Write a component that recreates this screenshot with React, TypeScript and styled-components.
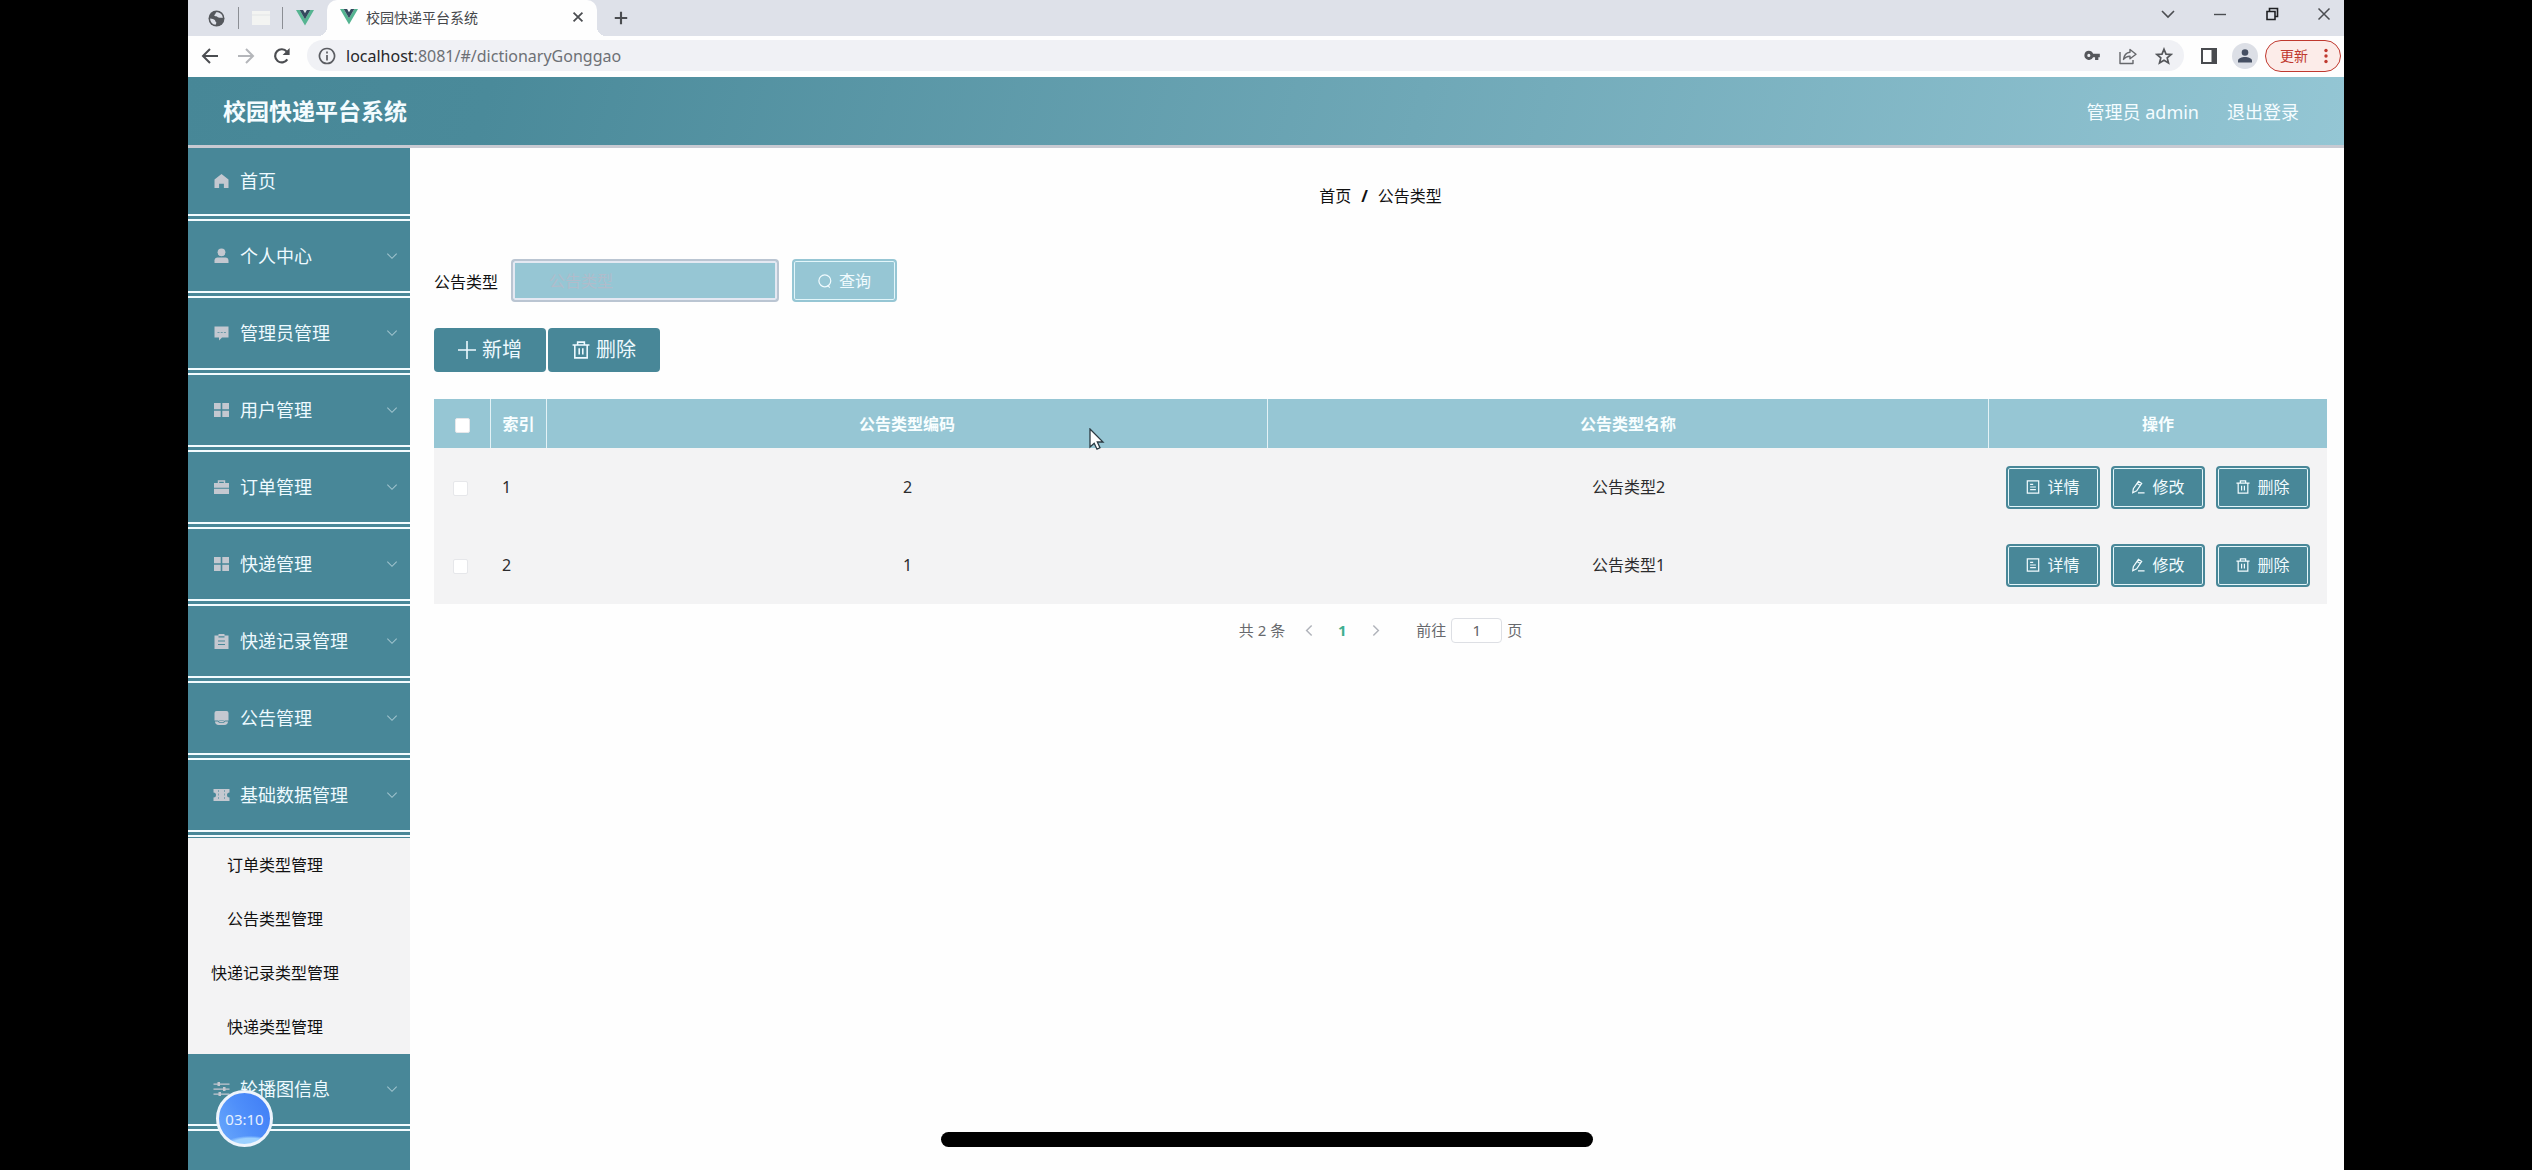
import React from "react";
import styled, { createGlobalStyle, css } from "styled-components";

const teal = "#488798";
const sky = "#96c6d4";
const family = `"Noto Sans", "Noto Sans CJK SC", sans-serif`;

const GlobalStyle = createGlobalStyle`
  *, *::before, *::after { box-sizing: border-box; }
  body { margin: 0; background: #000; font-family: ${family}; font-size: 16px; color: #111; }
  button, input { font-family: inherit; margin: 0; }
  button { cursor: pointer; }
  a { color: inherit; text-decoration: none; }
`;

/* ---------- frame ---------- */

const Screen = styled.div`
  position: relative;
  height: 100vh;
  padding: 0 188px;
  background: #000;
  overflow: hidden;
`;

const Browser = styled.div`
  display: flex;
  flex-direction: column;
  height: 100%;
  background: #fefefe;
`;

const TabStrip = styled.div`
  display: flex;
  align-items: center;
  height: 36px;
  flex: none;
  background: #dee1e9;
`;

const PinnedTabs = styled.div`
  display: flex;
  align-items: center;
  padding-left: 7px;
`;

const PinnedTab = styled.button`
  display: flex;
  align-items: center;
  justify-content: center;
  width: 44px;
  height: 22px;
  padding: 0;
  border: 0;
  border-right: 1px solid #8b8e94;
  background: transparent;
  &:last-child { border-right-color: transparent; }
`;

const ActiveTab = styled.div`
  position: relative;
  display: flex;
  align-items: center;
  align-self: stretch;
  width: 270px;
  padding: 0 7px 2px 13px;
  gap: 8px;
  border-radius: 10px 10px 0 0;
  background: #fefefe;
  font-size: 14px;
  color: #45474b;
  &::before, &::after {
    content: "";
    position: absolute;
    bottom: 0;
    width: 9px;
    height: 9px;
  }
  &::before { left: -9px; background: radial-gradient(circle at 0 0, transparent 9px, #fefefe 9px); }
  &::after { right: -9px; background: radial-gradient(circle at 100% 0, transparent 9px, #fefefe 9px); }
`;

const TabTitle = styled.span`
  flex: 1;
`;

const IconButton = styled.button<{ $w?: number }>`
  display: flex;
  align-items: center;
  justify-content: center;
  flex: none;
  width: ${(p) => p.$w ?? 36}px;
  height: 28px;
  padding: 0;
  border: 0;
  background: transparent;
  color: #4b4d51;
`;

const NewTab = styled(IconButton)`
  margin-left: 8px;
`;

const WindowControls = styled.div`
  display: flex;
  align-self: flex-start;
  margin-left: auto;
  margin-right: -6px;
`;

const Toolbar = styled.div`
  display: flex;
  align-items: center;
  flex: none;
  height: 41px;
  padding: 0 3px 2px 4px;
  background: #fefefe;
`;

const AddressBar = styled.div`
  display: flex;
  align-items: center;
  flex: 1;
  height: 31px;
  margin-left: 7px;
  margin-right: 7px;
  padding: 0 7px 0 11px;
  gap: 10px;
  border-radius: 16px;
  background: #f0f1f5;
`;

const Address = styled.div`
  flex: 1;
  font-size: 16px;
  line-height: 24px;
  color: #6d7075;
`;

const Host = styled.span`
  color: #26272a;
`;

const UpdateButton = styled.button`
  display: flex;
  align-items: center;
  justify-content: space-between;
  width: 76px;
  height: 32px;
  margin-left: 2px;
  padding: 0 12px 0 14px;
  border: 1px solid #c0392f;
  border-radius: 16px;
  background: #fcece9;
  color: #c0392f;
  font-size: 14px;
  line-height: 20px;
`;

const Avatar = styled.button`
  display: flex;
  align-items: center;
  justify-content: center;
  width: 26px;
  height: 26px;
  margin: 0 5px;
  padding: 0;
  border: 0;
  border-radius: 50%;
  background: #dcdfe6;
`;

/* ---------- app header ---------- */

const Header = styled.header`
  display: flex;
  align-items: center;
  flex: none;
  height: 71px;
  padding: 0 45px 0 35px;
  gap: 28px;
  border-bottom: 3px solid #c8cad2;
  background: linear-gradient(105deg, #478797 0%, #4a8a9a 14%, #94c6d4 100%);
  color: #f4fcff;
  font-size: 18px;
`;

const Brand = styled.h1`
  flex: 1;
  margin: 0;
  font-size: 23px;
  line-height: 32px;
  font-weight: 700;
`;

const Body = styled.div`
  display: flex;
  flex: 1;
  min-height: 0;
`;

/* ---------- sidebar ---------- */

const Sidebar = styled.nav`
  flex: none;
  width: 222px;
  background: ${teal};
`;

const MenuItem = styled.button<{ $first?: boolean }>`
  display: flex;
  align-items: center;
  width: 100%;
  height: ${(p) => (p.$first ? 73 : 77)}px;
  padding: 0 12px 0 25px;
  gap: 10px;
  border: 0;
  border-bottom: 7px double #f3fcff;
  background: ${teal};
  color: #eefaff;
  font-size: 18px;
  line-height: 26px;
  text-align: left;
`;

const MenuLabel = styled.span`
  flex: 1;
`;

const SubMenu = styled.div`
  display: flex;
  flex-direction: column;
  border-top: 1px solid ${teal};
  background: #f3f3f4;
`;

const SubLink = styled.a`
  display: flex;
  align-items: center;
  justify-content: center;
  height: 54px;
  padding-right: 48px;
  font-size: 16px;
  line-height: 24px;
`;

/* ---------- content ---------- */

const Content = styled.main`
  flex: 1;
  min-width: 0;
  padding: 32px 17px 0 24px;
`;

const Breadcrumb = styled.nav`
  display: flex;
  justify-content: center;
  gap: 10px;
  line-height: 32px;
`;

const Slash = styled.span`
  font-weight: 700;
`;

const SearchForm = styled.form`
  display: flex;
  align-items: center;
  margin-top: 47px;
`;

const SearchInput = styled.input`
  width: 268px;
  height: 43px;
  margin: 0 13px;
  padding: 0 36px;
  border: 2px solid #bac5d2;
  border-radius: 4px;
  box-shadow: inset 0 0 0 2px #e4e8f2;
  background: ${sky};
  font-size: 16px;
  &::placeholder { color: #b0bccb; opacity: 1; }
`;

const framed = css<{ $fill: string }>`
  display: flex;
  align-items: center;
  justify-content: center;
  gap: 7px;
  height: 43px;
  padding: 0;
  border: 2px solid ${(p) => p.$fill};
  border-radius: 4px;
  box-shadow: inset 0 0 0 1px #e3f6fa;
  background: ${(p) => p.$fill};
  color: #f1fbfe;
  font-size: 16px;
  line-height: 24px;
`;

const QueryButton = styled.button<{ $fill: string }>`
  ${framed}
  width: 105px;
`;

const RowButton = styled.button<{ $fill: string }>`
  ${framed}
  width: 94px;
`;

const Actions = styled.div`
  display: flex;
  gap: 2px;
  margin: 26px 0 27px;
`;

const ActionButton = styled.button`
  display: flex;
  align-items: center;
  justify-content: center;
  gap: 6px;
  width: 112px;
  height: 44px;
  padding: 0;
  border: 0;
  border-radius: 4px;
  background: ${teal};
  color: #eefaff;
  font-size: 20px;
  line-height: 28px;
`;

const Table = styled.table`
  width: 100%;
  table-layout: fixed;
  border-collapse: separate;
  border-spacing: 0;
`;

const Col = styled.col<{ $w?: number }>`
  width: ${(p) => (p.$w ? `${p.$w}px` : "auto")};
`;

const Th = styled.th`
  height: 49px;
  padding: 0;
  border-right: 1px solid #e4f2f6;
  background: ${sky};
  color: #f8feff;
  font-weight: 700;
  line-height: 24px;
  &:last-child { border-right: 0; }
`;

const Td = styled.td<{ $left?: number }>`
  height: 78px;
  padding: 0 0 0 ${(p) => p.$left ?? 0}px;
  background: #f3f3f4;
  text-align: ${(p) => (p.$left ? "left" : "center")};
  line-height: 24px;
  color: #2b2b2d;
`;

const CheckBox = styled.input`
  appearance: none;
  display: inline-block;
  width: 15px;
  height: 15px;
  border: 1px solid #e6e7ea;
  border-radius: 2px;
  background: #fff;
  vertical-align: middle;
`;

const RowButtons = styled.div`
  display: flex;
  justify-content: center;
  gap: 11px;
`;

const Pagination = styled.div`
  display: flex;
  align-items: center;
  justify-content: center;
  margin-top: 12px;
  font-size: 15px;
  line-height: 28px;
  color: #67696d;
`;

const Total = styled.span`
  margin-right: 6px;
`;

const PageButton = styled.button<{ $current?: boolean }>`
  display: flex;
  align-items: center;
  justify-content: center;
  width: ${(p) => (p.$current ? 30 : 36)}px;
  height: 28px;
  padding: 0;
  border: 0;
  background: transparent;
  font-size: 15px;
  font-weight: 700;
  color: ${(p) => (p.$current ? "#3fae90" : "#b0b3ba")};
`;

const Jump = styled.label`
  display: flex;
  align-items: center;
  gap: 5px;
  margin-left: 23px;
`;

const JumpInput = styled.input`
  width: 51px;
  height: 25px;
  padding: 0;
  border: 1px solid #dddfe4;
  border-radius: 4px;
  background: #fff;
  color: #606266;
  font-size: 15px;
  text-align: center;
`;

/* ---------- overlays ---------- */

const Pointer = styled.svg`
  position: absolute;
  left: 43%;
  top: 428px;
`;

const Timer = styled.div`
  position: absolute;
  left: 216px;
  bottom: 23px;
  display: flex;
  align-items: center;
  justify-content: center;
  width: 57px;
  height: 57px;
  border: 3px solid #eef4fc;
  border-radius: 50%;
  background: radial-gradient(ellipse 50% 16% at 62% 100%, #9cd0ff 70%, transparent 100%),
    linear-gradient(60deg, #6aa9fb 0%, #4f8ffa 50%, #3f7cf5 100%);
  color: #e6f1ff;
  font-size: 15px;
`;

const HomeBar = styled.div`
  position: absolute;
  left: 50%;
  bottom: 23px;
  width: 652px;
  height: 15px;
  margin-left: -325px;
  border-radius: 8px;
  background: #000;
`;

/* ---------- icons ---------- */

const VueLogo = () => (
  <svg width="18" height="16" viewBox="0 0 18 16" aria-hidden="true">
    <path d="M0 0h3.7L9 9.2 14.3 0H18L9 15.6z" fill="#55b491" />
    <path d="M3.7 0h3.4L9 3.3 10.9 0h3.4L9 9.2z" fill="#34495e" />
  </svg>
);

const Globe = () => (
  <svg width="17" height="17" viewBox="0 0 17 17" aria-hidden="true">
    <circle cx="8.5" cy="8.5" r="8" fill="#55585d" />
    <path d="M2.2 8.4c2 .2 3.600.6 4.600 1.500.6.6.2 1.300 1 1.800.8.4.6 1.600-.2 3.100C4.300 14.300 2 11.600 2.200 8.400z" fill="#dee1e9" />
    <path d="M8.200 2.200c-1 1.200-.4 1.800-1.600 2.600-.8.6 0 1.700 1.300 1.400 1.200-.3 1.400.8 2.500 1.300 1 .4 2.600-.2 4.300.5.2-3.400-2.600-6-6.500-5.800z" fill="#dee1e9" />
  </svg>
);

const BlankIcon = () => (
  <svg width="18" height="16" viewBox="0 0 18 16" aria-hidden="true">
    <rect x="0" y="1" width="18" height="14" fill="#f3f4f2" />
    <path d="M0 5h18" stroke="#e2e5e6" />
  </svg>
);

type StrokeProps = { d: string; size?: number; w?: number; color?: string };
const Stroke = ({ d, size = 18, w = 2, color = "currentColor" }: StrokeProps) => (
  <svg width={size} height={size} viewBox="0 0 18 18" fill="none" stroke={color} strokeWidth={w} aria-hidden="true">
    <path d={d} />
  </svg>
);

const Reload = () => (
  <svg width="18" height="18" viewBox="0 0 18 18" aria-hidden="true">
    <path d="M14.3 12.4A6.6 6.6 0 1 1 13.8 4.6" fill="none" stroke="#4b4d51" strokeWidth="2.2" />
    <path d="M16.6 1v7h-7z" fill="#4b4d51" />
  </svg>
);

const Key = () => (
  <svg width="17" height="11" viewBox="0 0 18 12" aria-hidden="true">
    <path fillRule="evenodd" d="M5 .8a5 5 0 0 1 4.7 3.300H17v3.800h-1.600V11h-3.600V7.900H9.700A5 5 0 1 1 5 .8zM5 4.200a1.700 1.700 0 1 0 0 3.400 1.700 1.700 0 0 0 0-3.400z" fill="#55575b" />
  </svg>
);

const Share = () => (
  <svg width="18" height="18" viewBox="0 0 18 18" fill="none" stroke="#66686c" strokeWidth="1.4" strokeLinejoin="round" aria-hidden="true">
    <path d="M1 5v11.5h13V13" />
    <path d="M11 2.5l6 4.700-6 4.600V9.200c-3 0-5 1-6.500 3.200C5 8.400 7 5.600 11 5.200z" />
  </svg>
);

const Star = () => (
  <svg width="18" height="18" viewBox="0 0 18 18" fill="none" stroke="#55575b" strokeWidth="1.7" aria-hidden="true">
    <path d="M9 2.200l2 4.900 5.200.4-4 3.400 1.300 5.100L9 13.200 4.500 16l1.300-5.100-4-3.400 5.200-.4z" />
  </svg>
);

const SidePanel = () => (
  <svg width="16" height="16" viewBox="0 0 16 16" aria-hidden="true">
    <path fillRule="evenodd" d="M0 0h16v16H0zM2 2v12h8.500V2z" fill="#494b4f" />
  </svg>
);

const Person = () => (
  <svg width="14" height="14" viewBox="0 0 14 14" fill="#465063" aria-hidden="true">
    <circle cx="7" cy="3.5" r="3.3" />
    <path d="M0 13.500v-2C0 9.300 4 8 7 8s7 1.300 7 3.500v2z" />
  </svg>
);

const Dots = () => (
  <svg width="4" height="16" viewBox="0 0 4 16" fill="#c0392f" aria-hidden="true">
    <circle cx="2" cy="2.5" r="1.7" />
    <circle cx="2" cy="8" r="1.7" />
    <circle cx="2" cy="13.5" r="1.7" />
  </svg>
);

const menuGlyphs: Record<string, React.ReactNode> = {
  home: <path d="M8 1l7 5.600V15h-4.600v-4.200H5.600V15H1V6.600z" />,
  user: (
    <>
      <circle cx="8" cy="4.3" r="3.9" />
      <path d="M1 15v-2.500C1 10.600 2.400 9.500 4 9.500h8c1.600 0 3 1.100 3 3V15z" />
    </>
  ),
  chat: (
    <>
      <path d="M1 1.500h14v11H8.500L5.500 15.500v-3H1z" />
      <path d="M4 7.500h2M7.200 7.500h2M10.400 7.500h2" stroke={teal} strokeWidth="1.2" opacity=".7" />
    </>
  ),
  grid: <path d="M.5 1h6.700v6.200H.5zM8.800 1h6.700v6.200H8.800zM.5 8.800h6.700V15H.5zM8.800 8.800h6.700V15H8.800z" />,
  bag: (
    <>
      <path d="M5 4V2h6v2" fill="none" stroke="#c4c8d0" strokeWidth="1.4" />
      <path d="M.5 4h15v4.700H.5zM.5 9.800h15V15H.5z" />
    </>
  ),
  board: (
    <>
      <path d="M1 2.500h4V1h6v1.500h4V16H1z" />
      <path d="M4.500 8h7M4.500 11.500h7M5 3.800h6" stroke={teal} strokeWidth="1.2" />
    </>
  ),
  notice: (
    <>
      <path d="M3 1h10a2 2 0 0 1 2 2v7.500H1V3a2 2 0 0 1 2-2zM1.500 11.500h3l1 1.200h5l1-1.200h3c0 2-1.500 3.500-3.500 3.500H5c-2 0-3.500-1.500-3.500-3.500z" />
      <path d="M5 10.200l1 1.300h4l1-1.300" stroke="#c4c8d0" fill="none" />
    </>
  ),
  ticket: (
    <>
      <path d="M0 2h16v3.500a2.500 2.500 0 0 0 0 5V14H0v-3.500a2.500 2.500 0 0 0 0-5z" />
      <path d="M5 3v10M11 3v10" stroke={teal} strokeWidth=".8" strokeDasharray="2 1.5" opacity=".7" />
    </>
  ),
  sliders: <path d="M0 2.500h16v1.200H0zM0 7.500h16v1.200H0zM0 12.500h16v1.200H0zM4 1h2.500v4H4zM9.500 6H12v4H9.500zM5 11h2.500v4H5z" />,
};

const MenuIcon = ({ name }: { name: string }) => (
  <svg width="17" height="16" viewBox="0 0 16 16" fill="#c4c8d0" aria-hidden="true">
    {menuGlyphs[name]}
  </svg>
);

const glyphs: Record<string, React.ReactNode> = {
  search: (
    <>
      <circle cx="7.8" cy="7.8" r="6.8" />
      <path d="M11 13l2.500 2.500" />
    </>
  ),
  plus: <path d="M8 0v16M0 8h16" />,
  trash: <path d="M.5 3.500h15M5 3.300V1h6v2.300M2.500 3.500V15h11V3.500M6.400 6.500v5.500M9.600 6.500v5.500" />,
  detail: <path d="M1.500 1h13v14h-13zM4.700 5h3.500M4.700 8h6.600M4.700 11h6.600" />,
  edit: <path d="M2 14.500l.7-4.500L8.500 1.500l3.700 2.400L6.500 12.400zM7 4l3.600 2.400M8 14.800h7.500" />,
};

const Glyph = ({ name, size = 14 }: { name: string; size?: number }) => (
  <svg width={size} height={size} viewBox="0 0 16 16" fill="none" stroke="currentColor" strokeWidth="1.4" aria-hidden="true">
    {glyphs[name]}
  </svg>
);

/* ---------- data ---------- */

const menu = [
  { icon: "home", label: "首页" },
  { icon: "user", label: "个人中心" },
  { icon: "chat", label: "管理员管理" },
  { icon: "grid", label: "用户管理" },
  { icon: "bag", label: "订单管理" },
  { icon: "grid", label: "快递管理" },
  { icon: "board", label: "快递记录管理" },
  { icon: "notice", label: "公告管理" },
  { icon: "ticket", label: "基础数据管理", children: ["订单类型管理", "公告类型管理", "快递记录类型管理", "快递类型管理"] },
  { icon: "sliders", label: "轮播图信息" },
];

const rows = [
  { index: 1, code: 2, name: "公告类型2" },
  { index: 2, code: 1, name: "公告类型1" },
];

const rowActions = [
  { icon: "detail", label: "详情" },
  { icon: "edit", label: "修改" },
  { icon: "trash", label: "删除" },
];

/* ---------- page ---------- */

const BrowserChrome = () => (
  <>
    <TabStrip>
      <PinnedTabs>
        <PinnedTab aria-label="网页"><Globe /></PinnedTab>
        <PinnedTab aria-label="空白页"><BlankIcon /></PinnedTab>
        <PinnedTab aria-label="Vue"><VueLogo /></PinnedTab>
      </PinnedTabs>
      <ActiveTab>
        <VueLogo />
        <TabTitle>校园快递平台系统</TabTitle>
        <IconButton $w={24} aria-label="关闭标签页"><Stroke d="M4 4l10 10M14 4L4 14" size={16} /></IconButton>
      </ActiveTab>
      <NewTab $w={32} aria-label="新标签页"><Stroke d="M9 2v14M2 9h14" w={2.4} size={16} /></NewTab>
      <WindowControls>
        <IconButton $w={52} aria-label="搜索标签页"><Stroke d="M3 6l6 6 6-6" w={1.6} /></IconButton>
        <IconButton $w={52} aria-label="最小化"><Stroke d="M3 9.500h12" w={1.4} /></IconButton>
        <IconButton $w={52} aria-label="还原"><Stroke d="M4 6.500h8v8H4zM6.500 6V3.500h8v8H12.500" w={1.6} color="#1f2023" /></IconButton>
        <IconButton $w={52} aria-label="关闭"><Stroke d="M3.500 3.500l11 11M14.500 3.500l-11 11" w={1.5} /></IconButton>
      </WindowControls>
    </TabStrip>
    <Toolbar>
      <IconButton aria-label="后退"><Stroke d="M17 9H2.500M9 2L2 9l7 7" /></IconButton>
      <IconButton aria-label="前进"><Stroke d="M1 9h14.500M9 2l7 7-7 7" color="#b4b6ba" /></IconButton>
      <IconButton aria-label="重新加载"><Reload /></IconButton>
      <AddressBar>
        <Stroke d="M9 1.500a7.500 7.500 0 1 0 .01 0zM9 8v5.500M9 4.500v2" w={1.7} color="#5b5d62" />
        <Address><Host>localhost</Host>:8081/#/dictionaryGonggao</Address>
        <IconButton $w={26} aria-label="密码"><Key /></IconButton>
        <IconButton $w={26} aria-label="分享"><Share /></IconButton>
        <IconButton $w={26} aria-label="收藏"><Star /></IconButton>
      </AddressBar>
      <IconButton aria-label="侧边栏"><SidePanel /></IconButton>
      <Avatar aria-label="用户"><Person /></Avatar>
      <UpdateButton>更新<Dots /></UpdateButton>
    </Toolbar>
  </>
);

const App = () => (
  <Screen>
    <GlobalStyle />
    <Browser>
      <BrowserChrome />
      <Header>
        <Brand>校园快递平台系统</Brand>
        <span>管理员 admin</span>
        <a href="#logout">退出登录</a>
      </Header>
      <Body>
        <Sidebar>
          {menu.map((item, i) => (
            <React.Fragment key={item.label}>
              <MenuItem $first={i === 0}>
                <MenuIcon name={item.icon} />
                <MenuLabel>{item.label}</MenuLabel>
                {i > 0 && <Stroke d="M2 5.500l7 7 7-7" size={12} w={1.6} color="#9fc3cd" />}
              </MenuItem>
              {item.children && (
                <SubMenu>
                  {item.children.map((c) => (
                    <SubLink key={c} href="#/dictionary">{c}</SubLink>
                  ))}
                </SubMenu>
              )}
            </React.Fragment>
          ))}
        </Sidebar>
        <Content>
          <Breadcrumb>
            <a href="#/">首页</a>
            <Slash>/</Slash>
            <span>公告类型</span>
          </Breadcrumb>
          <SearchForm onSubmit={(e) => e.preventDefault()}>
            <label htmlFor="type-name">公告类型</label>
            <SearchInput id="type-name" placeholder="公告类型" />
            <QueryButton $fill={sky}><Glyph name="search" />查询</QueryButton>
          </SearchForm>
          <Actions>
            <ActionButton><Glyph name="plus" size={18} />新增</ActionButton>
            <ActionButton><Glyph name="trash" size={18} />删除</ActionButton>
          </Actions>
          <Table>
            <colgroup>
              <Col $w={57} />
              <Col $w={56} />
              <Col />
              <Col />
              <Col $w={338} />
            </colgroup>
            <thead>
              <tr>
                <Th><CheckBox type="checkbox" aria-label="全选" /></Th>
                <Th>索引</Th>
                <Th>公告类型编码</Th>
                <Th>公告类型名称</Th>
                <Th>操作</Th>
              </tr>
            </thead>
            <tbody>
              {rows.map((r) => (
                <tr key={r.index}>
                  <Td $left={19}><CheckBox type="checkbox" aria-label={`选择第${r.index}行`} /></Td>
                  <Td $left={11}>{r.index}</Td>
                  <Td>{r.code}</Td>
                  <Td>{r.name}</Td>
                  <Td>
                    <RowButtons>
                      {rowActions.map((a) => (
                        <RowButton key={a.label} $fill={teal}><Glyph name={a.icon} />{a.label}</RowButton>
                      ))}
                    </RowButtons>
                  </Td>
                </tr>
              ))}
            </tbody>
          </Table>
          <Pagination>
            <Total>共 2 条</Total>
            <PageButton aria-label="上一页"><Stroke d="M12 2L5 9l7 7" size={13} /></PageButton>
            <PageButton $current>1</PageButton>
            <PageButton aria-label="下一页"><Stroke d="M6 2l7 7-7 7" size={13} /></PageButton>
            <Jump>
              前往
              <JumpInput defaultValue="1" />
              页
            </Jump>
          </Pagination>
        </Content>
      </Body>
    </Browser>
    <Pointer width="16" height="24" viewBox="0 0 16 24" aria-hidden="true">
      <path d="M1 1v18l4.200-3.800 2.800 6 3-1.400-2.700-5.800H14z" fill="#fff" stroke="#2b3a42" strokeWidth="1.3" />
    </Pointer>
    <Timer>03:10</Timer>
    <HomeBar />
  </Screen>
);

export default App;
